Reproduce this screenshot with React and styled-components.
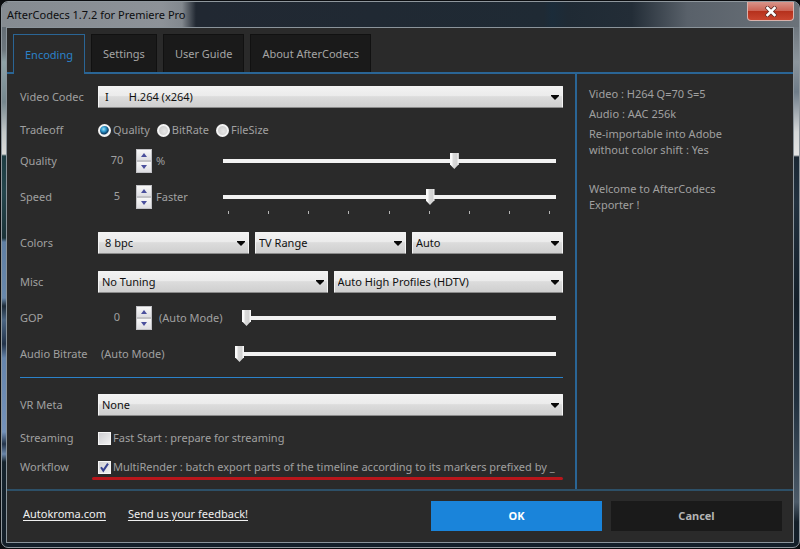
import React, { useState } from "react";
import styled, { createGlobalStyle } from "styled-components";

const BLUE = "#2a6595";
const PANEL = "#2a2a2a";
const MUTED = "#a0a0a0";

const GlobalStyle = createGlobalStyle`
  * { box-sizing: border-box; }
  body {
    margin: 0;
    background: #0b0d10;
    color: ${MUTED};
    font: 11px/16px "Noto Sans", "Open Sans", sans-serif;
  }
  button, input, select, output { font: inherit; color: inherit; }
`;

const Frame = styled.div`
  display: flex;
  flex-direction: column;
  min-height: 100vh;
  padding: 1px 0 1px 1px;
`;

const Window = styled.section`
  flex: 1;
  display: flex;
  flex-direction: column;
  padding: 0 5px 4px 4px;
  border: 1px solid #8f979d;
  border-radius: 7px;
  background:
    linear-gradient(180deg, #5a626a 0, #6d777e 48px, #8fa3a8 60px, #76878e 100px, #c3c8c8 130px, #dcdcda 152px, #1d3c42 154px, #24454c 190px, #1a3238 236px, #5f7fa4 240px, #6888ac 296px, #1c2a38 304px, #4b6583 318px, #22334a 342px, #6585ad 356px, #7492ba 430px, #23344a 442px, #6a86aa 452px, #15232d 460px, #141f29 100%) 0 0 / 4px 100% no-repeat,
    linear-gradient(180deg, #5a626a 0, #7b838a 40px, #8c959c 60px, #6f7c88 90px, #d5d7d8 130px, #e4e4e4 153px, #1a2733 155px, #22313f 200px, #141f29 300px, #22313f 400px, #4c5a68 500px, #141f29 520px) 100% 0 / 5px 100% no-repeat,
    #141f29;
`;

const TitleBar = styled.header`
  display: flex;
  align-items: flex-start;
  justify-content: space-between;
  height: 25px;
  margin: 0 -5px 0 -4px;
  padding: 0 5px;
  border-radius: 6px 6px 0 0;
  background:
    linear-gradient(90deg, #858b91 0, #8d9298 160px, #82888e 180px, transparent 194px) 0 0 / 100% 100% no-repeat,
    linear-gradient(90deg, #212832 200px, #1f2a34 68%, #1b2c3a 69%, #1f2a34 71%, #232d37 79%, #59616a 86%, #6b7279 100%);
`;

const Title = styled.h1`
  margin: 4px 0 0;
  font-size: 11px;
  line-height: 18px;
  font-weight: 400;
  color: #0c0d0f;
`;

const CloseButton = styled.button`
  display: grid;
  place-items: center;
  width: 47px;
  height: 19px;
  padding: 0;
  border: 1px solid #d9b2ac;
  border-top: 0;
  border-radius: 0 0 4px 4px;
  background: linear-gradient(#d9948a 0, #cc6455 48%, #b5301c 50%, #c9452f 100%);
`;

const Client = styled.div`
  flex: 1;
  display: flex;
  flex-direction: column;
  border: 1px solid #8b949b;
  background: ${PANEL};
`;

const Tabs = styled.nav`
  display: flex;
  align-items: flex-end;
  gap: 6px;
  height: 46px;
  padding: 0 6px;
  border-bottom: 2px solid ${BLUE};
`;

const Tab = styled.button`
  height: ${(p) => (p.$active ? 40 : 38)}px;
  margin-bottom: ${(p) => (p.$active ? -2 : 0)}px;
  padding: 0 11px;
  border: ${(p) => (p.$active ? `1px solid ${BLUE}` : "1px solid #111")};
  border-bottom: 0;
  background: ${(p) => (p.$active ? PANEL : "#1a1a1a")};
  color: ${(p) => (p.$active ? "#2b82c9" : "#a5a5a5")};
`;

const Body = styled.div`
  flex: 1;
  display: grid;
  grid-template-columns: minmax(0, 568fr) minmax(0, 218fr);
  border-bottom: 2px solid #2d5068;
`;

const Form = styled.form`
  padding: 11px 12px 8px 13px;
`;

const Row = styled.div`
  display: grid;
  grid-template-columns: 78px minmax(0, 1fr);
  align-items: center;
  min-height: 24px;
  margin-top: ${(p) => p.$gap || 0}px;
`;

const Label = styled.label`
  white-space: nowrap;
`;

const Selects = styled.div`
  display: grid;
  grid-auto-flow: column;
  grid-auto-columns: minmax(0, 1fr);
  gap: 6px;
`;

const SelectBox = styled.div`
  position: relative;
  display: flex;
  color: #101010;
`;

const Select = styled.select`
  appearance: none;
  width: 100%;
  height: 22px;
  padding: 0 20px 0 ${(p) => (p.$inset ? 6 : 3)}px;
  border: 1px solid #f4f4f4;
  border-bottom-color: #8a8a8a;
  border-radius: 1px;
  background: linear-gradient(#f2f2f2 0, #ebebeb 45%, #dcdcdc 48%, #cfcfcf 100%);
`;

const Arrow = styled.svg`
  position: absolute;
  right: 4px;
  top: 9px;
  pointer-events: none;
`;

const Line = styled.div`
  display: flex;
  align-items: center;
  gap: ${(p) => p.$gap || 0}px;
  padding-right: ${(p) => (p.$slider ? 7 : 0)}px;
`;

const Choice = styled.label`
  display: flex;
  align-items: center;
  gap: 2px;
  white-space: nowrap;
`;

const Radio = styled.input`
  appearance: none;
  width: 13px;
  height: 13px;
  margin: 0;
  border: 2px solid #f3f3f3;
  border-radius: 50%;
  background: radial-gradient(circle at 60% 60%, #e6e6e6, #c4c4c4);
  &:checked {
    background: radial-gradient(circle at 40% 35%, #9fe0f5 0, #2f9bd0 30%, #0b3d66 60%, #dfe6ea 75%);
  }
`;

const Check = styled.span`
  display: grid;
  width: 13px;
  height: 13px;
  & > * { grid-area: 1 / 1; }
`;

const CheckInput = styled.input`
  appearance: none;
  width: 13px;
  height: 13px;
  margin: 0;
  border: 1px solid #f6f6f6;
  background: linear-gradient(135deg, #cfcfd2, #f0f0f0);
`;

const SpinInput = styled.input`
  width: 38px;
  height: 20px;
  margin-bottom: 4px;
  padding: 0;
  border: 0;
  background: transparent;
  text-align: center;
`;

const Spinner = styled.div`
  display: grid;
  grid-template-rows: 1fr 1fr;
  width: 16px;
  height: 24px;
  background: #f4f4f4;
`;

const SpinButton = styled.button`
  display: grid;
  place-items: center;
  padding: 0;
  border: 1px solid #c2c2c6;
  background: linear-gradient(#f8f8f8, #dedee2);
`;

const Suffix = styled.span`
  flex: none;
  width: ${(p) => p.$width}px;
  padding-left: ${(p) => p.$inset}px;
  white-space: nowrap;
`;

const Slider = styled.input`
  appearance: none;
  flex: 1;
  min-width: 0;
  height: 16px;
  margin: 0;
  background: linear-gradient(#f2f2f2, #f2f2f2) 0 6px / 100% 4px no-repeat;
  &::-webkit-slider-thumb {
    appearance: none;
    width: 9px;
    height: 16px;
    background: linear-gradient(90deg, #fafafa 0 2px, #dadada 3px, #d2d2d2 7px, #f6f6f6 8px);
    clip-path: polygon(0 0, 100% 0, 100% 70%, 50% 100%, 0 70%);
  }
`;

const Ticks = styled.div`
  display: flex;
  justify-content: space-between;
  margin: 2px 13px 0 208px;
`;

const Tick = styled.i`
  width: 1px;
  height: 3px;
  background: #b5b5b5;
`;

const Rule = styled.div`
  height: 1px;
  margin-top: 11px;
  background: #2b82c9;
`;

const Underline = styled.div`
  height: 3px;
  margin: -2px 0 0 72px;
  border-radius: 2px;
  background: #b8161b;
`;

const Summary = styled.aside`
  padding: 12px 50px 12px 12px;
  border-left: 2px solid ${BLUE};
`;

const Note = styled.p`
  margin: 0 0 ${(p) => p.$after || 4}px;
`;

const Footer = styled.footer`
  display: grid;
  grid-template-columns: minmax(0, 424fr) minmax(0, 351fr);
  align-items: center;
  min-height: 51px;
  padding: 0 11px 2px 0;
`;

const Links = styled.div`
  display: flex;
  gap: 22px;
  padding: 0 0 4px 16px;
`;

const Link = styled.a`
  color: #f0f0f0;
  text-underline-offset: 2px;
`;

const Actions = styled.div`
  display: grid;
  grid-template-columns: 1fr 1fr;
  gap: 9px;
`;

const ActionButton = styled.button`
  height: 30px;
  border: 0;
  background: ${(p) => (p.$primary ? "#1a84da" : "#1a1a1a")};
  color: ${(p) => (p.$primary ? "#fff" : "#b4b4b4")};
  font-weight: 700;
`;

function Dropdown({ id, label, value, inset }) {
  return (
    <SelectBox>
      <Select id={id} aria-label={label} $inset={inset}>
        <option>{value}</option>
      </Select>
      <Arrow width="8" height="5" viewBox="0 0 8 5" aria-hidden="true">
        <path d="M0 0h8v1L4 5 0 1z" fill="#080808" />
      </Arrow>
    </SelectBox>
  );
}

function Spin({ id, value, onChange }) {
  return (
    <>
      <SpinInput id={id} value={value} inputMode="numeric" onChange={(e) => onChange(Number(e.target.value) || 0)} />
      <Spinner>
        <SpinButton type="button" aria-label="Increase" onClick={() => onChange(value + 1)}>
          <svg width="6" height="4" viewBox="0 0 6 4"><path d="M0 4 3 0l3 4z" fill="#4a4f9c" /></svg>
        </SpinButton>
        <SpinButton type="button" aria-label="Decrease" onClick={() => onChange(Math.max(0, value - 1))}>
          <svg width="6" height="4" viewBox="0 0 6 4"><path d="M0 0h6L3 4z" fill="#4a4f9c" /></svg>
        </SpinButton>
      </Spinner>
    </>
  );
}

function Checkbox({ id, checked, onChange, children }) {
  return (
    <Choice>
      <Check>
        <CheckInput id={id} type="checkbox" checked={checked} onChange={() => onChange(!checked)} />
        {checked && (
          <svg width="13" height="13" viewBox="0 0 13 13" pointerEvents="none" aria-hidden="true">
            <path d="M3 6.2 5.3 9.6 10 2.6" fill="none" stroke="#35418f" strokeWidth="2" />
          </svg>
        )}
      </Check>
      {children}
    </Choice>
  );
}

const TABS = ["Encoding", "Settings", "User Guide", "About AfterCodecs"];
const MODES = ["Quality", "BitRate", "FileSize"];

export default function App() {
  const [tab, setTab] = useState("Encoding");
  const [mode, setMode] = useState("Quality");
  const [quality, setQuality] = useState(70);
  const [speed, setSpeed] = useState(5);
  const [gop, setGop] = useState(0);
  const [audio, setAudio] = useState(0);
  const [fast, setFast] = useState(false);
  const [multi, setMulti] = useState(true);
  const num = (set) => (e) => set(Number(e.target.value));

  return (
    <Frame>
      <GlobalStyle />
      <Window>
        <TitleBar>
          <Title>AfterCodecs 1.7.2 for Premiere Pro</Title>
          <CloseButton aria-label="Close">
            <svg width="12" height="11" viewBox="0 0 12 11">
              <path d="M2.5 2 9.5 9M9.5 2 2.5 9" stroke="#5b2a26" strokeWidth="4" strokeLinecap="square" />
              <path d="M2.5 2 9.5 9M9.5 2 2.5 9" stroke="#fff" strokeWidth="2.6" strokeLinecap="square" />
            </svg>
          </CloseButton>
        </TitleBar>
        <Client>
          <Tabs>
            {TABS.map((t) => (
              <Tab key={t} type="button" $active={t === tab} onClick={() => setTab(t)}>{t}</Tab>
            ))}
          </Tabs>
          <Body>
            <Form>
              <Row>
                <Label htmlFor="codec">Video Codec</Label>
                <Dropdown id="codec" inset value={"I\u00a0\u00a0\u00a0\u00a0\u00a0\u00a0\u00a0H.264 (x264)"} />
              </Row>
              <Row $gap={9}>
                <span>Tradeoff</span>
                <Line $gap={7}>
                  {MODES.map((m) => (
                    <Choice key={m}>
                      <Radio type="radio" name="tradeoff" checked={m === mode} onChange={() => setMode(m)} />
                      {m}
                    </Choice>
                  ))}
                </Line>
              </Row>
              <Row $gap={7}>
                <Label htmlFor="quality">Quality</Label>
                <Line $slider>
                  <Spin id="quality" value={quality} onChange={setQuality} />
                  <Suffix $width={71} $inset={4}>%</Suffix>
                  <Slider type="range" aria-label="Quality" max="100" value={quality} onChange={num(setQuality)} />
                </Line>
              </Row>
              <Row $gap={12}>
                <Label htmlFor="speed">Speed</Label>
                <Line $slider>
                  <Spin id="speed" value={speed} onChange={setSpeed} />
                  <Suffix $width={71} $inset={4}>Faster</Suffix>
                  <Slider type="range" aria-label="Speed" max="8" value={speed} onChange={num(setSpeed)} />
                </Line>
              </Row>
              <Ticks>
                {Array.from({ length: 9 }, (_, i) => <Tick key={i} />)}
              </Ticks>
              <Row $gap={17}>
                <Label htmlFor="depth">Colors</Label>
                <Selects>
                  <Dropdown id="depth" inset value="8 bpc" />
                  <Dropdown label="Range" value="TV Range" />
                  <Dropdown label="Color space" value="Auto" />
                </Selects>
              </Row>
              <Row $gap={15}>
                <Label htmlFor="tuning">Misc</Label>
                <Selects>
                  <Dropdown id="tuning" value="No Tuning" />
                  <Dropdown label="Profile" value="Auto High Profiles (HDTV)" />
                </Selects>
              </Row>
              <Row $gap={12}>
                <Label htmlFor="gop">GOP</Label>
                <Line $slider>
                  <Spin id="gop" value={gop} onChange={setGop} />
                  <Suffix $width={90} $inset={7}>(Auto Mode)</Suffix>
                  <Slider type="range" aria-label="GOP" max="300" value={gop} onChange={num(setGop)} />
                </Line>
              </Row>
              <Row $gap={12}>
                <Label htmlFor="audio">Audio Bitrate</Label>
                <Line $slider>
                  <Suffix $width={137} $inset={3}>(Auto Mode)</Suffix>
                  <Slider id="audio" type="range" max="512" value={audio} onChange={num(setAudio)} />
                </Line>
              </Row>
              <Rule />
              <Row $gap={15}>
                <Label htmlFor="vr">VR Meta</Label>
                <Dropdown id="vr" value="None" />
              </Row>
              <Row $gap={9}>
                <Label htmlFor="fast">Streaming</Label>
                <Checkbox id="fast" checked={fast} onChange={setFast}>Fast Start : prepare for streaming</Checkbox>
              </Row>
              <Row $gap={5}>
                <Label htmlFor="multi">Workflow</Label>
                <Checkbox id="multi" checked={multi} onChange={setMulti}>
                  MultiRender : batch export parts of the timeline according to its markers prefixed by _
                </Checkbox>
              </Row>
              <Underline />
            </Form>
            <Summary>
              <Note>Video : H264 Q=70 S=5</Note>
              <Note>Audio : AAC 256k</Note>
              <Note $after={23}>Re-importable into Adobe without color shift : Yes</Note>
              <Note>Welcome to AfterCodecs Exporter !</Note>
            </Summary>
          </Body>
          <Footer>
            <Links>
              <Link href="#autokroma">Autokroma.com</Link>
              <Link href="#feedback">Send us your feedback!</Link>
            </Links>
            <Actions>
              <ActionButton type="button" $primary>OK</ActionButton>
              <ActionButton type="button">Cancel</ActionButton>
            </Actions>
          </Footer>
        </Client>
      </Window>
    </Frame>
  );
}
